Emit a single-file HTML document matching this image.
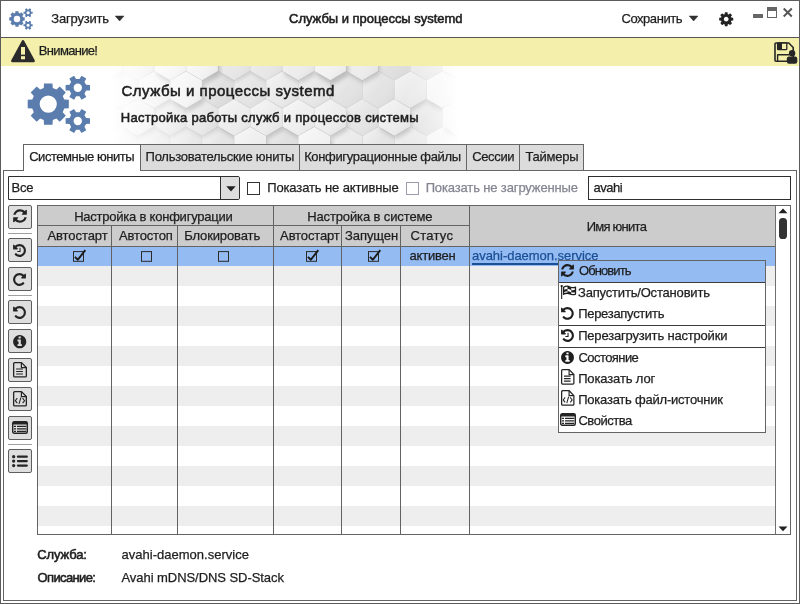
<!DOCTYPE html><html lang="ru"><head><meta charset="utf-8"><title>Службы и процессы systemd</title>
<style>html,body{margin:0;padding:0;background:#fff;overflow:hidden}body{width:800px;height:604px;position:relative;font-family:"Liberation Sans", sans-serif;font-size:13px;color:#1e1e1e}
.t{position:absolute;white-space:nowrap;line-height:16px;height:16px;-webkit-text-stroke:0.25px}svg{display:block;overflow:visible}
</style></head><body>
<div style="position:absolute;left:0px;top:0px;width:800px;height:604px;background:#fff;box-sizing:border-box;border:1px solid #5c5c5c;"></div>
<div style="position:absolute;left:1px;top:37px;width:798px;height:1px;background:#555;"></div>
<div style="position:absolute;left:1px;top:38px;width:798px;height:28px;background:#f4f0ac;"></div>
<svg style="position:absolute;left:100px;top:66px" width="362" height="78" viewBox="0 0 362 78"><defs><linearGradient id="fade" x1="0" x2="1" y1="0" y2="0"><stop offset="0" stop-color="#fff" stop-opacity="1"/><stop offset="0.03" stop-color="#fff" stop-opacity="1"/><stop offset="0.15" stop-color="#fff" stop-opacity="0.6"/><stop offset="0.33" stop-color="#fff" stop-opacity="0"/><stop offset="0.84" stop-color="#fff" stop-opacity="0"/><stop offset="0.93" stop-color="#fff" stop-opacity="0.55"/><stop offset="0.99" stop-color="#fff" stop-opacity="1"/><stop offset="1" stop-color="#fff" stop-opacity="1"/></linearGradient><linearGradient id="hl" x1="0" y1="0" x2="1" y2="1"><stop offset="0" stop-color="#fff" stop-opacity="0.55"/><stop offset="0.5" stop-color="#fff" stop-opacity="0"/><stop offset="1" stop-color="#000" stop-opacity="0.07"/></linearGradient><filter id="bl" x="-20%%" y="-20%%" width="140%%" height="140%%"><feGaussianBlur stdDeviation="2"/></filter><clipPath id="hc"><rect x="0" y="0" width="362" height="78"/></clipPath></defs><g clip-path="url(#hc)"><rect width="362" height="78" fill="#dadada"/><g filter="url(#bl)"><polygon points="310.7,6.3 295.0,15.4 279.2,6.3 279.2,-11.9 295.0,-21.0 310.7,-11.9" fill="#8a8a8a" fill-opacity="0.22"/><polygon points="342.8,6.3 327.0,15.4 311.3,6.3 311.3,-11.9 327.0,-21.0 342.8,-11.9" fill="#8a8a8a" fill-opacity="0.22"/><polygon points="134.5,34.0 118.8,43.1 103.0,34.1 103.0,15.9 118.8,6.8 134.5,15.9" fill="#8a8a8a" fill-opacity="0.22"/><polygon points="166.6,34.0 150.8,43.1 135.0,34.1 135.0,15.9 150.8,6.8 166.6,15.9" fill="#8a8a8a" fill-opacity="0.22"/><polygon points="262.7,34.0 246.9,43.1 231.2,34.1 231.2,15.9 246.9,6.8 262.7,15.9" fill="#8a8a8a" fill-opacity="0.22"/><polygon points="294.7,34.0 279.0,43.1 263.2,34.1 263.2,15.9 279.0,6.8 294.7,15.9" fill="#8a8a8a" fill-opacity="0.22"/><polygon points="22.4,61.8 6.6,70.9 -9.2,61.8 -9.2,43.6 6.6,34.5 22.4,43.6" fill="#8a8a8a" fill-opacity="0.22"/><polygon points="278.7,61.8 262.9,70.9 247.2,61.8 247.2,43.6 262.9,34.5 278.7,43.6" fill="#8a8a8a" fill-opacity="0.22"/><polygon points="342.8,61.8 327.0,70.9 311.3,61.8 311.3,43.6 327.0,34.5 342.8,43.6" fill="#8a8a8a" fill-opacity="0.22"/><polygon points="6.3,89.5 -9.4,98.7 -25.2,89.6 -25.2,71.4 -9.4,62.2 6.3,71.4" fill="#8a8a8a" fill-opacity="0.22"/><polygon points="38.4,89.5 22.6,98.7 6.9,89.6 6.9,71.4 22.6,62.2 38.4,71.4" fill="#8a8a8a" fill-opacity="0.22"/><polygon points="70.4,89.5 54.7,98.7 38.9,89.6 38.9,71.4 54.7,62.2 70.4,71.4" fill="#8a8a8a" fill-opacity="0.22"/><polygon points="102.5,89.5 86.7,98.7 70.9,89.6 70.9,71.4 86.7,62.2 102.5,71.4" fill="#8a8a8a" fill-opacity="0.22"/><polygon points="134.5,89.5 118.8,98.7 103.0,89.6 103.0,71.4 118.8,62.2 134.5,71.4" fill="#8a8a8a" fill-opacity="0.22"/><polygon points="198.6,89.5 182.8,98.7 167.1,89.6 167.1,71.4 182.8,62.2 198.6,71.4" fill="#8a8a8a" fill-opacity="0.22"/></g><polygon points="310.2,5.1 294.4,14.2 278.6,5.1 278.6,-13.1 294.4,-22.2 310.2,-13.1" fill="rgb(224,224,224)"/><polygon points="310.2,5.1 294.4,14.2 278.6,5.1 278.6,-13.1 294.4,-22.2 310.2,-13.1" fill="url(#hl)"/><polygon points="342.2,5.1 326.4,14.2 310.6,5.1 310.6,-13.1 326.4,-22.2 342.2,-13.1" fill="rgb(229,229,229)"/><polygon points="342.2,5.1 326.4,14.2 310.6,5.1 310.6,-13.1 326.4,-22.2 342.2,-13.1" fill="url(#hl)"/><polygon points="134.0,32.9 118.2,42.0 102.3,32.9 102.3,14.6 118.2,5.5 134.0,14.6" fill="rgb(224,224,224)"/><polygon points="134.0,32.9 118.2,42.0 102.3,32.9 102.3,14.6 118.2,5.5 134.0,14.6" fill="url(#hl)"/><polygon points="166.0,32.9 150.2,42.0 134.4,32.9 134.4,14.6 150.2,5.5 166.0,14.6" fill="rgb(229,229,229)"/><polygon points="166.0,32.9 150.2,42.0 134.4,32.9 134.4,14.6 150.2,5.5 166.0,14.6" fill="url(#hl)"/><polygon points="262.1,32.9 246.3,42.0 230.5,32.9 230.5,14.6 246.3,5.5 262.1,14.6" fill="rgb(227,227,227)"/><polygon points="262.1,32.9 246.3,42.0 230.5,32.9 230.5,14.6 246.3,5.5 262.1,14.6" fill="url(#hl)"/><polygon points="294.2,32.9 278.4,42.0 262.6,32.9 262.6,14.6 278.4,5.5 294.2,14.6" fill="rgb(227,227,227)"/><polygon points="294.2,32.9 278.4,42.0 262.6,32.9 262.6,14.6 278.4,5.5 294.2,14.6" fill="url(#hl)"/><polygon points="21.8,60.6 6.0,69.8 -9.8,60.6 -9.8,42.4 6.0,33.2 21.8,42.4" fill="rgb(224,224,224)"/><polygon points="21.8,60.6 6.0,69.8 -9.8,60.6 -9.8,42.4 6.0,33.2 21.8,42.4" fill="url(#hl)"/><polygon points="278.1,60.6 262.3,69.8 246.5,60.6 246.5,42.4 262.3,33.2 278.1,42.4" fill="rgb(229,229,229)"/><polygon points="278.1,60.6 262.3,69.8 246.5,60.6 246.5,42.4 262.3,33.2 278.1,42.4" fill="url(#hl)"/><polygon points="342.2,60.6 326.4,69.8 310.6,60.6 310.6,42.4 326.4,33.2 342.2,42.4" fill="rgb(224,224,224)"/><polygon points="342.2,60.6 326.4,69.8 310.6,60.6 310.6,42.4 326.4,33.2 342.2,42.4" fill="url(#hl)"/><polygon points="5.8,88.4 -10.0,97.5 -25.8,88.4 -25.8,70.1 -10.0,61.0 5.8,70.1" fill="rgb(227,227,227)"/><polygon points="5.8,88.4 -10.0,97.5 -25.8,88.4 -25.8,70.1 -10.0,61.0 5.8,70.1" fill="url(#hl)"/><polygon points="37.8,88.4 22.0,97.5 6.2,88.4 6.2,70.1 22.0,61.0 37.8,70.1" fill="rgb(229,229,229)"/><polygon points="37.8,88.4 22.0,97.5 6.2,88.4 6.2,70.1 22.0,61.0 37.8,70.1" fill="url(#hl)"/><polygon points="69.9,88.4 54.1,97.5 38.3,88.4 38.3,70.1 54.1,61.0 69.9,70.1" fill="rgb(227,227,227)"/><polygon points="69.9,88.4 54.1,97.5 38.3,88.4 38.3,70.1 54.1,61.0 69.9,70.1" fill="url(#hl)"/><polygon points="101.9,88.4 86.1,97.5 70.3,88.4 70.3,70.1 86.1,61.0 101.9,70.1" fill="rgb(227,227,227)"/><polygon points="101.9,88.4 86.1,97.5 70.3,88.4 70.3,70.1 86.1,61.0 101.9,70.1" fill="url(#hl)"/><polygon points="134.0,88.4 118.2,97.5 102.3,88.4 102.3,70.1 118.2,61.0 134.0,70.1" fill="rgb(229,229,229)"/><polygon points="134.0,88.4 118.2,97.5 102.3,88.4 102.3,70.1 118.2,61.0 134.0,70.1" fill="url(#hl)"/><polygon points="198.0,88.4 182.2,97.5 166.4,88.4 166.4,70.1 182.2,61.0 198.0,70.1" fill="rgb(224,224,224)"/><polygon points="198.0,88.4 182.2,97.5 166.4,88.4 166.4,70.1 182.2,61.0 198.0,70.1" fill="url(#hl)"/><g filter="url(#bl)"><polygon points="-9.1,7.4 -24.9,16.5 -40.7,7.4 -40.7,-10.8 -24.9,-19.9 -9.1,-10.8" fill="#8a8a8a" fill-opacity="0.31"/><polygon points="151.1,7.4 135.3,16.5 119.6,7.4 119.6,-10.8 135.3,-19.9 151.1,-10.8" fill="#8a8a8a" fill-opacity="0.31"/><polygon points="183.1,7.4 167.4,16.5 151.6,7.4 151.6,-10.8 167.4,-19.9 183.1,-10.8" fill="#8a8a8a" fill-opacity="0.31"/><polygon points="6.9,35.1 -8.9,44.2 -24.6,35.2 -24.6,17.0 -8.9,7.9 6.9,17.0" fill="#8a8a8a" fill-opacity="0.31"/><polygon points="199.1,35.1 183.4,44.2 167.6,35.2 167.6,17.0 183.4,7.9 199.1,17.0" fill="#8a8a8a" fill-opacity="0.31"/><polygon points="231.2,35.1 215.4,44.2 199.7,35.2 199.7,17.0 215.4,7.9 231.2,17.0" fill="#8a8a8a" fill-opacity="0.31"/><polygon points="87.0,62.9 71.2,72.0 55.5,62.9 55.5,44.7 71.2,35.6 87.0,44.7" fill="#8a8a8a" fill-opacity="0.31"/><polygon points="119.0,62.9 103.3,72.0 87.5,62.9 87.5,44.7 103.3,35.6 119.0,44.7" fill="#8a8a8a" fill-opacity="0.31"/><polygon points="263.2,90.6 247.5,99.8 231.7,90.7 231.7,72.5 247.5,63.3 263.2,72.5" fill="#8a8a8a" fill-opacity="0.31"/><polygon points="295.3,90.6 279.5,99.8 263.8,90.7 263.8,72.5 279.5,63.3 295.3,72.5" fill="#8a8a8a" fill-opacity="0.31"/><polygon points="327.3,90.6 311.6,99.8 295.8,90.7 295.8,72.5 311.6,63.3 327.3,72.5" fill="#8a8a8a" fill-opacity="0.31"/></g><polygon points="-10.2,5.1 -26.0,14.2 -41.8,5.1 -41.8,-13.1 -26.0,-22.2 -10.2,-13.1" fill="rgb(234,234,234)"/><polygon points="-10.2,5.1 -26.0,14.2 -41.8,5.1 -41.8,-13.1 -26.0,-22.2 -10.2,-13.1" fill="url(#hl)"/><polygon points="150.0,5.1 134.2,14.2 118.4,5.1 118.4,-13.1 134.2,-22.2 150.0,-13.1" fill="rgb(232,232,232)"/><polygon points="150.0,5.1 134.2,14.2 118.4,5.1 118.4,-13.1 134.2,-22.2 150.0,-13.1" fill="url(#hl)"/><polygon points="182.0,5.1 166.2,14.2 150.4,5.1 150.4,-13.1 166.2,-22.2 182.0,-13.1" fill="rgb(232,232,232)"/><polygon points="182.0,5.1 166.2,14.2 150.4,5.1 150.4,-13.1 166.2,-22.2 182.0,-13.1" fill="url(#hl)"/><polygon points="5.8,32.9 -10.0,42.0 -25.8,32.9 -25.8,14.6 -10.0,5.5 5.8,14.6" fill="rgb(229,229,229)"/><polygon points="5.8,32.9 -10.0,42.0 -25.8,32.9 -25.8,14.6 -10.0,5.5 5.8,14.6" fill="url(#hl)"/><polygon points="198.0,32.9 182.2,42.0 166.4,32.9 166.4,14.6 182.2,5.5 198.0,14.6" fill="rgb(234,234,234)"/><polygon points="198.0,32.9 182.2,42.0 166.4,32.9 166.4,14.6 182.2,5.5 198.0,14.6" fill="url(#hl)"/><polygon points="230.1,32.9 214.3,42.0 198.5,32.9 198.5,14.6 214.3,5.5 230.1,14.6" fill="rgb(232,232,232)"/><polygon points="230.1,32.9 214.3,42.0 198.5,32.9 198.5,14.6 214.3,5.5 230.1,14.6" fill="url(#hl)"/><polygon points="85.9,60.6 70.1,69.8 54.3,60.6 54.3,42.4 70.1,33.2 85.9,42.4" fill="rgb(229,229,229)"/><polygon points="85.9,60.6 70.1,69.8 54.3,60.6 54.3,42.4 70.1,33.2 85.9,42.4" fill="url(#hl)"/><polygon points="117.9,60.6 102.1,69.8 86.3,60.6 86.3,42.4 102.1,33.2 117.9,42.4" fill="rgb(229,229,229)"/><polygon points="117.9,60.6 102.1,69.8 86.3,60.6 86.3,42.4 102.1,33.2 117.9,42.4" fill="url(#hl)"/><polygon points="262.1,88.4 246.3,97.5 230.5,88.4 230.5,70.1 246.3,61.0 262.1,70.1" fill="rgb(234,234,234)"/><polygon points="262.1,88.4 246.3,97.5 230.5,88.4 230.5,70.1 246.3,61.0 262.1,70.1" fill="url(#hl)"/><polygon points="294.2,88.4 278.4,97.5 262.6,88.4 262.6,70.1 278.4,61.0 294.2,70.1" fill="rgb(229,229,229)"/><polygon points="294.2,88.4 278.4,97.5 262.6,88.4 262.6,70.1 278.4,61.0 294.2,70.1" fill="url(#hl)"/><polygon points="326.2,88.4 310.4,97.5 294.6,88.4 294.6,70.1 310.4,61.0 326.2,70.1" fill="rgb(232,232,232)"/><polygon points="326.2,88.4 310.4,97.5 294.6,88.4 294.6,70.1 310.4,61.0 326.2,70.1" fill="url(#hl)"/><g filter="url(#bl)"><polygon points="55.5,8.5 39.7,17.6 24.0,8.5 24.0,-9.7 39.7,-18.8 55.5,-9.7" fill="#8a8a8a" fill-opacity="0.40"/><polygon points="215.7,8.5 200.0,17.6 184.2,8.5 184.2,-9.7 200.0,-18.8 215.7,-9.7" fill="#8a8a8a" fill-opacity="0.40"/><polygon points="279.8,8.5 264.0,17.6 248.3,8.5 248.3,-9.7 264.0,-18.8 279.8,-9.7" fill="#8a8a8a" fill-opacity="0.40"/><polygon points="408.0,8.5 392.2,17.6 376.5,8.5 376.5,-9.7 392.2,-18.8 408.0,-9.7" fill="#8a8a8a" fill-opacity="0.40"/><polygon points="39.5,36.2 23.7,45.3 8.0,36.2 8.0,18.1 23.7,8.9 39.5,18.1" fill="#8a8a8a" fill-opacity="0.40"/><polygon points="71.5,36.2 55.8,45.3 40.0,36.2 40.0,18.1 55.8,8.9 71.5,18.1" fill="#8a8a8a" fill-opacity="0.40"/><polygon points="327.9,36.2 312.1,45.3 296.3,36.2 296.3,18.1 312.1,8.9 327.9,18.1" fill="#8a8a8a" fill-opacity="0.40"/><polygon points="392.0,36.2 376.2,45.3 360.4,36.2 360.4,18.1 376.2,8.9 392.0,18.1" fill="#8a8a8a" fill-opacity="0.40"/><polygon points="-8.6,64.0 -24.3,73.1 -40.1,64.0 -40.1,45.8 -24.3,36.7 -8.6,45.8" fill="#8a8a8a" fill-opacity="0.40"/><polygon points="55.5,64.0 39.7,73.1 24.0,64.0 24.0,45.8 39.7,36.7 55.5,45.8" fill="#8a8a8a" fill-opacity="0.40"/><polygon points="151.6,64.0 135.9,73.1 120.1,64.0 120.1,45.8 135.9,36.7 151.6,45.8" fill="#8a8a8a" fill-opacity="0.40"/><polygon points="183.7,64.0 167.9,73.1 152.2,64.0 152.2,45.8 167.9,36.7 183.7,45.8" fill="#8a8a8a" fill-opacity="0.40"/><polygon points="215.7,64.0 200.0,73.1 184.2,64.0 184.2,45.8 200.0,36.7 215.7,45.8" fill="#8a8a8a" fill-opacity="0.40"/><polygon points="247.8,64.0 232.0,73.1 216.2,64.0 216.2,45.8 232.0,36.7 247.8,45.8" fill="#8a8a8a" fill-opacity="0.40"/><polygon points="311.8,64.0 296.1,73.1 280.3,64.0 280.3,45.8 296.1,36.7 311.8,45.8" fill="#8a8a8a" fill-opacity="0.40"/><polygon points="408.0,64.0 392.2,73.1 376.5,64.0 376.5,45.8 392.2,36.7 408.0,45.8" fill="#8a8a8a" fill-opacity="0.40"/><polygon points="167.7,91.8 151.9,100.9 136.1,91.8 136.1,73.6 151.9,64.5 167.7,73.6" fill="#8a8a8a" fill-opacity="0.40"/><polygon points="359.9,91.8 344.2,100.9 328.4,91.8 328.4,73.6 344.2,64.5 359.9,73.6" fill="#8a8a8a" fill-opacity="0.40"/></g><polygon points="53.8,5.1 38.0,14.2 22.2,5.1 22.2,-13.1 38.0,-22.2 53.8,-13.1" fill="rgb(234,234,234)"/><polygon points="53.8,5.1 38.0,14.2 22.2,5.1 22.2,-13.1 38.0,-22.2 53.8,-13.1" fill="url(#hl)"/><polygon points="214.1,5.1 198.3,14.2 182.5,5.1 182.5,-13.1 198.3,-22.2 214.1,-13.1" fill="rgb(237,237,237)"/><polygon points="214.1,5.1 198.3,14.2 182.5,5.1 182.5,-13.1 198.3,-22.2 214.1,-13.1" fill="url(#hl)"/><polygon points="278.1,5.1 262.3,14.2 246.5,5.1 246.5,-13.1 262.3,-22.2 278.1,-13.1" fill="rgb(237,237,237)"/><polygon points="278.1,5.1 262.3,14.2 246.5,5.1 246.5,-13.1 262.3,-22.2 278.1,-13.1" fill="url(#hl)"/><polygon points="406.3,5.1 390.5,14.2 374.7,5.1 374.7,-13.1 390.5,-22.2 406.3,-13.1" fill="rgb(234,234,234)"/><polygon points="406.3,5.1 390.5,14.2 374.7,5.1 374.7,-13.1 390.5,-22.2 406.3,-13.1" fill="url(#hl)"/><polygon points="37.8,32.9 22.0,42.0 6.2,32.9 6.2,14.6 22.0,5.5 37.8,14.6" fill="rgb(234,234,234)"/><polygon points="37.8,32.9 22.0,42.0 6.2,32.9 6.2,14.6 22.0,5.5 37.8,14.6" fill="url(#hl)"/><polygon points="69.9,32.9 54.1,42.0 38.3,32.9 38.3,14.6 54.1,5.5 69.9,14.6" fill="rgb(239,239,239)"/><polygon points="69.9,32.9 54.1,42.0 38.3,32.9 38.3,14.6 54.1,5.5 69.9,14.6" fill="url(#hl)"/><polygon points="326.2,32.9 310.4,42.0 294.6,32.9 294.6,14.6 310.4,5.5 326.2,14.6" fill="rgb(234,234,234)"/><polygon points="326.2,32.9 310.4,42.0 294.6,32.9 294.6,14.6 310.4,5.5 326.2,14.6" fill="url(#hl)"/><polygon points="390.3,32.9 374.5,42.0 358.7,32.9 358.7,14.6 374.5,5.5 390.3,14.6" fill="rgb(234,234,234)"/><polygon points="390.3,32.9 374.5,42.0 358.7,32.9 358.7,14.6 374.5,5.5 390.3,14.6" fill="url(#hl)"/><polygon points="-10.2,60.6 -26.0,69.8 -41.8,60.6 -41.8,42.4 -26.0,33.2 -10.2,42.4" fill="rgb(234,234,234)"/><polygon points="-10.2,60.6 -26.0,69.8 -41.8,60.6 -41.8,42.4 -26.0,33.2 -10.2,42.4" fill="url(#hl)"/><polygon points="53.8,60.6 38.0,69.8 22.2,60.6 22.2,42.4 38.0,33.2 53.8,42.4" fill="rgb(234,234,234)"/><polygon points="53.8,60.6 38.0,69.8 22.2,60.6 22.2,42.4 38.0,33.2 53.8,42.4" fill="url(#hl)"/><polygon points="150.0,60.6 134.2,69.8 118.4,60.6 118.4,42.4 134.2,33.2 150.0,42.4" fill="rgb(237,237,237)"/><polygon points="150.0,60.6 134.2,69.8 118.4,60.6 118.4,42.4 134.2,33.2 150.0,42.4" fill="url(#hl)"/><polygon points="182.0,60.6 166.2,69.8 150.4,60.6 150.4,42.4 166.2,33.2 182.0,42.4" fill="rgb(237,237,237)"/><polygon points="182.0,60.6 166.2,69.8 150.4,60.6 150.4,42.4 166.2,33.2 182.0,42.4" fill="url(#hl)"/><polygon points="214.1,60.6 198.3,69.8 182.5,60.6 182.5,42.4 198.3,33.2 214.1,42.4" fill="rgb(239,239,239)"/><polygon points="214.1,60.6 198.3,69.8 182.5,60.6 182.5,42.4 198.3,33.2 214.1,42.4" fill="url(#hl)"/><polygon points="246.1,60.6 230.3,69.8 214.5,60.6 214.5,42.4 230.3,33.2 246.1,42.4" fill="rgb(237,237,237)"/><polygon points="246.1,60.6 230.3,69.8 214.5,60.6 214.5,42.4 230.3,33.2 246.1,42.4" fill="url(#hl)"/><polygon points="310.2,60.6 294.4,69.8 278.6,60.6 278.6,42.4 294.4,33.2 310.2,42.4" fill="rgb(237,237,237)"/><polygon points="310.2,60.6 294.4,69.8 278.6,60.6 278.6,42.4 294.4,33.2 310.2,42.4" fill="url(#hl)"/><polygon points="406.3,60.6 390.5,69.8 374.7,60.6 374.7,42.4 390.5,33.2 406.3,42.4" fill="rgb(234,234,234)"/><polygon points="406.3,60.6 390.5,69.8 374.7,60.6 374.7,42.4 390.5,33.2 406.3,42.4" fill="url(#hl)"/><polygon points="166.0,88.4 150.2,97.5 134.4,88.4 134.4,70.1 150.2,61.0 166.0,70.1" fill="rgb(239,239,239)"/><polygon points="166.0,88.4 150.2,97.5 134.4,88.4 134.4,70.1 150.2,61.0 166.0,70.1" fill="url(#hl)"/><polygon points="358.3,88.4 342.5,97.5 326.6,88.4 326.6,70.1 342.5,61.0 358.3,70.1" fill="rgb(239,239,239)"/><polygon points="358.3,88.4 342.5,97.5 326.6,88.4 326.6,70.1 342.5,61.0 358.3,70.1" fill="url(#hl)"/><g filter="url(#bl)"><polygon points="24.0,9.6 8.3,18.7 -7.5,9.6 -7.5,-8.6 8.2,-17.7 24.0,-8.6" fill="#8a8a8a" fill-opacity="0.49"/><polygon points="88.1,9.6 72.3,18.7 56.6,9.6 56.6,-8.6 72.3,-17.7 88.1,-8.6" fill="#8a8a8a" fill-opacity="0.49"/><polygon points="120.1,9.6 104.4,18.7 88.6,9.6 88.6,-8.6 104.4,-17.7 120.1,-8.6" fill="#8a8a8a" fill-opacity="0.49"/><polygon points="248.3,9.6 232.6,18.7 216.8,9.6 216.8,-8.6 232.6,-17.7 248.3,-8.6" fill="#8a8a8a" fill-opacity="0.49"/><polygon points="376.5,9.6 360.7,18.7 345.0,9.6 345.0,-8.6 360.7,-17.7 376.5,-8.6" fill="#8a8a8a" fill-opacity="0.49"/><polygon points="104.1,37.3 88.4,46.5 72.6,37.4 72.6,19.2 88.4,10.1 104.1,19.2" fill="#8a8a8a" fill-opacity="0.49"/><polygon points="360.5,37.3 344.7,46.5 328.9,37.4 328.9,19.2 344.7,10.1 360.5,19.2" fill="#8a8a8a" fill-opacity="0.49"/><polygon points="376.5,65.1 360.7,74.2 345.0,65.1 345.0,46.9 360.7,37.8 376.5,46.9" fill="#8a8a8a" fill-opacity="0.49"/><polygon points="232.3,92.8 216.5,102.0 200.8,92.9 200.8,74.7 216.5,65.5 232.3,74.7" fill="#8a8a8a" fill-opacity="0.49"/><polygon points="392.5,92.8 376.7,102.0 361.0,92.9 361.0,74.7 376.7,65.5 392.5,74.7" fill="#8a8a8a" fill-opacity="0.49"/></g><polygon points="21.8,5.1 6.0,14.2 -9.8,5.1 -9.8,-13.1 6.0,-22.2 21.8,-13.1" fill="rgb(239,239,239)"/><polygon points="21.8,5.1 6.0,14.2 -9.8,5.1 -9.8,-13.1 6.0,-22.2 21.8,-13.1" fill="url(#hl)"/><polygon points="85.9,5.1 70.1,14.2 54.3,5.1 54.3,-13.1 70.1,-22.2 85.9,-13.1" fill="rgb(244,244,244)"/><polygon points="85.9,5.1 70.1,14.2 54.3,5.1 54.3,-13.1 70.1,-22.2 85.9,-13.1" fill="url(#hl)"/><polygon points="117.9,5.1 102.1,14.2 86.3,5.1 86.3,-13.1 102.1,-22.2 117.9,-13.1" fill="rgb(242,242,242)"/><polygon points="117.9,5.1 102.1,14.2 86.3,5.1 86.3,-13.1 102.1,-22.2 117.9,-13.1" fill="url(#hl)"/><polygon points="246.1,5.1 230.3,14.2 214.5,5.1 214.5,-13.1 230.3,-22.2 246.1,-13.1" fill="rgb(242,242,242)"/><polygon points="246.1,5.1 230.3,14.2 214.5,5.1 214.5,-13.1 230.3,-22.2 246.1,-13.1" fill="url(#hl)"/><polygon points="374.3,5.1 358.5,14.2 342.7,5.1 342.7,-13.1 358.5,-22.2 374.3,-13.1" fill="rgb(239,239,239)"/><polygon points="374.3,5.1 358.5,14.2 342.7,5.1 342.7,-13.1 358.5,-22.2 374.3,-13.1" fill="url(#hl)"/><polygon points="101.9,32.9 86.1,42.0 70.3,32.9 70.3,14.6 86.1,5.5 101.9,14.6" fill="rgb(242,242,242)"/><polygon points="101.9,32.9 86.1,42.0 70.3,32.9 70.3,14.6 86.1,5.5 101.9,14.6" fill="url(#hl)"/><polygon points="358.3,32.9 342.5,42.0 326.6,32.9 326.6,14.6 342.5,5.5 358.3,14.6" fill="rgb(242,242,242)"/><polygon points="358.3,32.9 342.5,42.0 326.6,32.9 326.6,14.6 342.5,5.5 358.3,14.6" fill="url(#hl)"/><polygon points="374.3,60.6 358.5,69.8 342.7,60.6 342.7,42.4 358.5,33.2 374.3,42.4" fill="rgb(239,239,239)"/><polygon points="374.3,60.6 358.5,69.8 342.7,60.6 342.7,42.4 358.5,33.2 374.3,42.4" fill="url(#hl)"/><polygon points="230.1,88.4 214.3,97.5 198.5,88.4 198.5,70.1 214.3,61.0 230.1,70.1" fill="rgb(242,242,242)"/><polygon points="230.1,88.4 214.3,97.5 198.5,88.4 198.5,70.1 214.3,61.0 230.1,70.1" fill="url(#hl)"/><polygon points="390.3,88.4 374.5,97.5 358.7,88.4 358.7,70.1 374.5,61.0 390.3,70.1" fill="rgb(239,239,239)"/><polygon points="390.3,88.4 374.5,97.5 358.7,88.4 358.7,70.1 374.5,61.0 390.3,70.1" fill="url(#hl)"/><rect width="362" height="78" fill="url(#fade)"/></g></svg>
<div style="position:absolute;left:3px;top:170px;width:794px;height:431px;background:#fff;box-sizing:border-box;border:1px solid #646464;"></div>
<div style="position:absolute;left:140px;top:144px;width:160px;height:27px;background:#dcdcdc;box-sizing:border-box;border:1px solid #666;"></div>
<div style="position:absolute;left:299px;top:144px;width:168px;height:27px;background:#dcdcdc;box-sizing:border-box;border:1px solid #666;"></div>
<div style="position:absolute;left:466px;top:144px;width:54px;height:27px;background:#dcdcdc;box-sizing:border-box;border:1px solid #666;"></div>
<div style="position:absolute;left:519px;top:144px;width:65px;height:27px;background:#dcdcdc;box-sizing:border-box;border:1px solid #666;"></div>
<div style="position:absolute;left:23px;top:144px;width:118px;height:27px;background:#fff;box-sizing:border-box;border:1px solid #646464;border-bottom:none;"></div>
<div style="position:absolute;left:8px;top:176px;width:232px;height:24px;background:#fff;box-sizing:border-box;border:1px solid #2e2e2e;border-radius:0 2px 2px 0;"></div>
<div style="position:absolute;left:220px;top:177px;width:19px;height:22px;background:#dedede;box-sizing:border-box;border-left:1px solid #2e2e2e;border-radius:0 1px 1px 0;"></div>
<svg style="position:absolute;left:225.600px;top:185.500px" width="10" height="6" viewBox="0 0 10 6"><path d="M0.3 0.3h9.4L5 5.6z" fill="#222"/></svg>
<div style="position:absolute;left:247px;top:182px;width:13px;height:13px;background:#fff;box-sizing:border-box;border:1px solid #333;"></div>
<div style="position:absolute;left:406px;top:182px;width:13px;height:13px;background:#fff;box-sizing:border-box;border:1px solid #9c9caa;"></div>
<div style="position:absolute;left:588px;top:176px;width:203px;height:24px;background:#fff;box-sizing:border-box;border:1px solid #2e2e2e;"></div>
<div style="position:absolute;left:8px;top:205px;width:24px;height:24px;background:#dedede;box-sizing:border-box;border:1px solid #5e5e5e;border-radius:2px;"></div>
<div style="position:absolute;left:8px;top:238px;width:24px;height:24px;background:#dedede;box-sizing:border-box;border:1px solid #5e5e5e;border-radius:2px;"></div>
<div style="position:absolute;left:8px;top:267px;width:24px;height:24px;background:#dedede;box-sizing:border-box;border:1px solid #5e5e5e;border-radius:2px;"></div>
<div style="position:absolute;left:8px;top:300px;width:24px;height:24px;background:#dedede;box-sizing:border-box;border:1px solid #5e5e5e;border-radius:2px;"></div>
<div style="position:absolute;left:8px;top:329px;width:24px;height:24px;background:#dedede;box-sizing:border-box;border:1px solid #5e5e5e;border-radius:2px;"></div>
<div style="position:absolute;left:8px;top:358px;width:24px;height:24px;background:#dedede;box-sizing:border-box;border:1px solid #5e5e5e;border-radius:2px;"></div>
<div style="position:absolute;left:8px;top:387px;width:24px;height:24px;background:#dedede;box-sizing:border-box;border:1px solid #5e5e5e;border-radius:2px;"></div>
<div style="position:absolute;left:8px;top:416px;width:24px;height:24px;background:#dedede;box-sizing:border-box;border:1px solid #5e5e5e;border-radius:2px;"></div>
<div style="position:absolute;left:8px;top:449px;width:24px;height:24px;background:#dedede;box-sizing:border-box;border:1px solid #5e5e5e;border-radius:2px;"></div>
<div style="position:absolute;left:8px;top:233px;width:24px;height:1px;background:#a0a0a0;"></div>
<div style="position:absolute;left:8px;top:295px;width:24px;height:1px;background:#a0a0a0;"></div>
<div style="position:absolute;left:8px;top:444px;width:24px;height:1px;background:#a0a0a0;"></div>
<svg style="position:absolute;left:11.85px;top:208.3px" width="16" height="16" viewBox="0 0 1792 1792"><path fill="#242424" d="M1639 1056q0 5-1 7-64 268-268 434.500t-478 166.500q-146 0-282.500-55t-243.500-157l-129 129q-19 19-45 19t-45-19-19-45v-448q0-26 19-45t45-19h448q26 0 45 19t19 45-19 45l-137 137q71 66 161 102t187 36q134 0 250-65t186-179q11-17 53-117 8-23 30-23h192q13 0 22.500 9.500t9.500 22.500zm25-800v448q0 26-19 45t-45 19h-448q-26 0-45-19t-19-45 19-45l138-138q-148-137-349-137-134 0-250 65t-186 179q-11 17-53 117-8 23-30 23h-199q-13 0-22.500-9.500t-9.500-22.500v-7q65-268 270-434.500t480-166.500q146 0 284 55.500t245 156.500l130-129q19-19 45-19t45 19 19 45z"/></svg>
<svg style="position:absolute;left:12px;top:243.1px" width="15" height="15" viewBox="0 0 1792 1792"><path fill="#242424" d="M1664 896q0 156-61 298t-164 245-245 164-298 61q-172 0-327-72.500t-264-204.500q-7-10-6.500-22.500t8.500-20.500l137-138q10-9 25-9 16 2 23 12 73 95 179 147t225 52q104 0 198.500-40.500t163.500-109.500 109.500-163.500 40.500-198.500-40.500-198.500-109.500-163.500-163.500-109.500-198.500-40.500q-98 0-188 35.500t-160 101.500l137 138q31 30 14 69-17 40-59 40h-448q-26 0-45-19t-19-45v-448q0-42 40-59 39-17 69 14l130 129q107-101 244.500-156.500t284.500-55.500q156 0 298 61t245 164 164 245 61 298zm-640-288v448q0 14-9 23t-23 9h-320q-14 0-23-9t-9-23v-64q0-14 9-23t23-9h224v-352q0-14 9-23t23-9h64q14 0 23 9t9 23z"/></svg>
<svg style="position:absolute;left:12px;top:271.6px" width="15" height="15" viewBox="0 0 1792 1792"><path fill="#242424" d="M1664 256v448q0 26-19 45t-45 19h-448q-42 0-59-40-17-39 14-69l138-138q-148-137-349-137-104 0-198.500 40.500t-163.500 109.500-109.500 163.500-40.500 198.500 40.500 198.500 109.500 163.500 163.500 109.500 198.500 40.500q119 0 225-52t179-147q7-10 23-12 15 0 25 9l137 138q9 8 9.500 20.500t-7.500 22.500q-109 132-264 204.500t-327 72.500q-156 0-298-61t-245-164-164-245-61-298 61-298 164-245 245-164 298-61q147 0 284.500 55.500t244.500 156.500l130-129q29-31 70-14 39 17 39 59z"/></svg>
<svg style="position:absolute;left:11.7px;top:304.9px" width="15" height="15" viewBox="0 0 1792 1792"><path fill="#242424" d="M1664 896q0 156-61 298t-164 245-245 164-298 61q-172 0-327-72.500t-264-204.500q-7-10-6.500-22.500t8.500-20.500l137-138q10-9 25-9 16 2 23 12 73 95 179 147t225 52q104 0 198.500-40.500t163.500-109.500 109.500-163.500 40.500-198.500-40.500-198.500-109.500-163.500-163.500-109.500-198.500-40.500q-98 0-188 35.500t-160 101.500l137 138q31 30 14 69-17 40-59 40h-448q-26 0-45-19t-19-45v-448q0-42 40-59 39-17 69 14l130 129q107-101 244.500-156.500t284.500-55.500q156 0 298 61t245 164 164 245 61 298z"/></svg>
<svg style="position:absolute;left:12.15px;top:333.55px" width="15.4" height="15.4" viewBox="0 0 1792 1792"><path fill="#242424" d="M1152 1376v-160q0-14-9-23t-23-9h-96v-512q0-14-9-23t-23-9h-320q-14 0-23 9t-9 23v160q0 14 9 23t23 9h96v320h-96q-14 0-23 9t-9 23v160q0 14 9 23t23 9h448q14 0 23-9t9-23zm-128-896v-160q0-14-9-23t-23-9h-192q-14 0-23 9t-9 23v160q0 14 9 23t23 9h192q14 0 23-9t9-23zm640 416q0 209-103 385.500t-279.500 279.500-385.500 103-385.500-103-279.500-279.500-103-385.500 103-385.500 279.500-279.500 385.500-103 385.500 103 279.500 279.500 103 385.500z"/></svg>
<svg style="position:absolute;left:13.1px;top:362.4px" width="14" height="15.5" viewBox="0 0 14 15.5" preserveAspectRatio="none"><path d="M1.6 0.65h6.9l4.85 4.85v8.400a1 1 0 0 1-1 1h-10.700a1 1 0 0 1-1-1v-12.200a1 1 0 0 1 1-1z" fill="none" stroke="#242424" stroke-width="1.300" stroke-linejoin="round"/><path d="M8.400 0.800v4.800h4.800" fill="none" stroke="#242424" stroke-width="1.200"/><path d="M3.100 7h6.800M3.100 9.500h6.800M3.100 12h6.800" stroke="#242424" stroke-width="1.150"/></svg>
<svg style="position:absolute;left:13.1px;top:391.3px" width="14" height="15.5" viewBox="0 0 14 15.5" preserveAspectRatio="none"><path d="M1.6 0.65h6.900l4.850 4.850v8.400a1 1 0 0 1-1 1h-10.700a1 1 0 0 1-1-1v-12.200a1 1 0 0 1 1-1z" fill="none" stroke="#242424" stroke-width="1.300" stroke-linejoin="round"/><path d="M8.400 0.800v4.800h4.800" fill="none" stroke="#242424" stroke-width="1.200"/><path d="M4.300 7.200L2.300 9.700L4.300 12.200M9.600 7.200L11.600 9.700L9.600 12.200M7.900 6.600L6 12.900" fill="none" stroke="#242424" stroke-width="1.050"/></svg>
<svg style="position:absolute;left:11.9px;top:421px" width="16" height="13" viewBox="0 0 16 13"><rect x="0.700" y="0.700" width="14.600" height="11.600" rx="1.500" fill="none" stroke="#242424" stroke-width="1.400"/><path d="M0.700 3.600v-1.400a1.500 1.500 0 0 1 1.500-1.500h11.600a1.500 1.500 0 0 1 1.500 1.500v1.400z" fill="#242424"/><path d="M5 5.400h9.300M5 7.800h9.300M5 10.300h9.300" stroke="#242424" stroke-width="1.150"/><path d="M1.900 5.400h2.100M1.900 7.800h2.100M1.900 10.300h2.100" stroke="#242424" stroke-width="1.150"/></svg>
<svg style="position:absolute;left:11.9px;top:455.2px" width="16" height="12.400" viewBox="0 0 16 12.400"><circle cx="1.650" cy="1.700" r="1.650" fill="#242424"/><circle cx="1.650" cy="6.100" r="1.650" fill="#242424"/><circle cx="1.650" cy="10.600" r="1.650" fill="#242424"/><path d="M5.900 1.700h8.900M5.900 6.100h8.900M5.900 10.600h8.900" stroke="#242424" stroke-width="2.200" stroke-linecap="round"/></svg>
<div style="position:absolute;left:37px;top:205px;width:754px;height:330px;background:#fff;box-sizing:border-box;border:1px solid #646464;"></div>
<div style="position:absolute;left:38px;top:266px;width:737px;height:20px;background:#eeeeee;"></div>
<div style="position:absolute;left:38px;top:306px;width:737px;height:20px;background:#eeeeee;"></div>
<div style="position:absolute;left:38px;top:346px;width:737px;height:20px;background:#eeeeee;"></div>
<div style="position:absolute;left:38px;top:386px;width:737px;height:20px;background:#eeeeee;"></div>
<div style="position:absolute;left:38px;top:426px;width:737px;height:20px;background:#eeeeee;"></div>
<div style="position:absolute;left:38px;top:466px;width:737px;height:20px;background:#eeeeee;"></div>
<div style="position:absolute;left:38px;top:506px;width:737px;height:20px;background:#eeeeee;"></div>
<div style="position:absolute;left:38px;top:247px;width:737px;height:19px;background:#94bbf2;"></div>
<div style="position:absolute;left:38px;top:206px;width:737px;height:40px;background:#cccccc;"></div>
<div style="position:absolute;left:38px;top:225px;width:432px;height:1px;background:#646464;"></div>
<div style="position:absolute;left:38px;top:246px;width:738px;height:1px;background:#646464;"></div>
<div style="position:absolute;left:273px;top:206px;width:1px;height:328px;background:#626262;"></div>
<div style="position:absolute;left:469px;top:206px;width:1px;height:328px;background:#626262;"></div>
<div style="position:absolute;left:111px;top:226px;width:1px;height:308px;background:#626262;"></div>
<div style="position:absolute;left:177px;top:226px;width:1px;height:308px;background:#626262;"></div>
<div style="position:absolute;left:341px;top:226px;width:1px;height:308px;background:#626262;"></div>
<div style="position:absolute;left:400px;top:226px;width:1px;height:308px;background:#626262;"></div>
<div style="position:absolute;left:775px;top:206px;width:1px;height:328px;background:#707070;"></div>
<div style="position:absolute;left:776px;top:206px;width:14px;height:328px;background:#fff;"></div>
<svg style="position:absolute;left:778px;top:208px" width="10" height="6" viewBox="0 0 10 6"><path d="M0.5 5.2L5 0.6L9.5 5.2z" fill="#222"/></svg>
<svg style="position:absolute;left:778px;top:526px" width="10" height="6" viewBox="0 0 10 6"><path d="M0.5 0.6L5 5.2L9.5 0.6z" fill="#222"/></svg>
<div style="position:absolute;left:779px;top:217.8px;width:8px;height:21.1px;background:#333;border-radius:3.600px;"></div>
<svg style="position:absolute;left:73px;top:249px" width="14" height="13" viewBox="0 0 14 13"><rect x="0.5" y="2.6" width="10" height="9.700" fill="none" stroke="#2a2a2a" stroke-width="1"/><path d="M1.900 7.900L4.900 10.700L12.300 1.200" fill="none" stroke="#1c1c1c" stroke-width="1.900" stroke-linejoin="round"/></svg>
<svg style="position:absolute;left:141px;top:249px" width="14" height="13" viewBox="0 0 14 13"><rect x="0.5" y="2.6" width="10" height="9.700" fill="none" stroke="#2a2a2a" stroke-width="1"/></svg>
<svg style="position:absolute;left:217.5px;top:249px" width="14" height="13" viewBox="0 0 14 13"><rect x="0.5" y="2.6" width="10" height="9.700" fill="none" stroke="#2a2a2a" stroke-width="1"/></svg>
<svg style="position:absolute;left:306px;top:249px" width="14" height="13" viewBox="0 0 14 13"><rect x="0.5" y="2.6" width="10" height="9.700" fill="none" stroke="#2a2a2a" stroke-width="1"/><path d="M1.900 7.900L4.900 10.700L12.300 1.200" fill="none" stroke="#1c1c1c" stroke-width="1.900" stroke-linejoin="round"/></svg>
<svg style="position:absolute;left:368px;top:249px" width="14" height="13" viewBox="0 0 14 13"><rect x="0.5" y="2.6" width="10" height="9.700" fill="none" stroke="#2a2a2a" stroke-width="1"/><path d="M1.900 7.900L4.900 10.700L12.300 1.200" fill="none" stroke="#1c1c1c" stroke-width="1.900" stroke-linejoin="round"/></svg>
<div style="position:absolute;left:0;top:0;width:800px;height:604px;will-change:transform">
<span class="t" style="left:472px;top:248px;color:#1b4f96;letter-spacing:-0.034px;text-decoration:underline;text-underline-offset:2.5px;text-decoration-thickness:1.5px;">avahi-daemon.service</span>
</div>
<div style="position:absolute;left:558px;top:260px;width:208px;height:173px;background:#fff;box-sizing:border-box;border:1px solid #646464;"></div>
<div style="position:absolute;left:559px;top:261px;width:206px;height:21px;background:#94bbf2;"></div>
<div style="position:absolute;left:559px;top:282px;width:206px;height:1px;background:#3c3c3c;"></div>
<div style="position:absolute;left:559px;top:325px;width:206px;height:1px;background:#3c3c3c;"></div>
<div style="position:absolute;left:559px;top:347px;width:206px;height:1px;background:#3c3c3c;"></div>
<svg style="position:absolute;left:560.2px;top:262.9px" width="15" height="15" viewBox="0 0 1792 1792"><path fill="#1e1e1e" d="M1639 1056q0 5-1 7-64 268-268 434.500t-478 166.500q-146 0-282.500-55t-243.500-157l-129 129q-19 19-45 19t-45-19-19-45v-448q0-26 19-45t45-19h448q26 0 45 19t19 45-19 45l-137 137q71 66 161 102t187 36q134 0 250-65t186-179q11-17 53-117 8-23 30-23h192q13 0 22.500 9.500t9.500 22.500zm25-800v448q0 26-19 45t-45 19h-448q-26 0-45-19t-19-45 19-45l138-138q-148-137-349-137-134 0-250 65t-186 179q-11 17-53 117-8 23-30 23h-199q-13 0-22.500-9.500t-9.500-22.500v-7q65-268 270-434.500t480-166.500q146 0 284 55.500t245 156.500l130-129q19-19 45-19t45 19 19 45z"/></svg>
<svg style="position:absolute;left:560px;top:284.4px" width="18" height="16" viewBox="560 284 18 16"><path d="M561.650 285.600V299" stroke="#1e1e1e" stroke-width="1.100"/><circle cx="561.650" cy="286.100" r="1.150" fill="#1e1e1e"/><path d="M563.600 287.300C565.800 285.900 568 285.900 570 287S573.600 287.900 575.500 287.100V294.100C573.600 294.900 572 295 570 294S565.800 293 563.600 294.300Z" fill="#fff" stroke="#1e1e1e" stroke-width="1.300" stroke-linejoin="round"/><path d="M567.500 286.400C568.600 286.400 570 287 571.300 287.500V289.900C570 289.400 568.600 288.900 567.500 288.900ZM567.500 291.300C568.600 291.300 570 291.800 571.300 292.300V294.500C570 294 568.600 293.500 567.500 293.500ZM563.600 289.900C565 289.200 566.300 288.900 567.500 288.900V291.300C566.300 291.300 565 291.600 563.600 292.300ZM571.300 289.900C572.800 290.300 574 290.200 575.500 289.700V291.900C574 292.400 572.800 292.600 571.300 292.300Z" fill="#1e1e1e"/></svg>
<svg style="position:absolute;left:560.4px;top:306.45px" width="14.8" height="14.8" viewBox="0 0 1792 1792"><path fill="#1e1e1e" d="M1664 896q0 156-61 298t-164 245-245 164-298 61q-172 0-327-72.500t-264-204.500q-7-10-6.500-22.500t8.500-20.500l137-138q10-9 25-9 16 2 23 12 73 95 179 147t225 52q104 0 198.500-40.500t163.500-109.500 109.500-163.500 40.500-198.500-40.500-198.500-109.500-163.500-163.500-109.500-198.500-40.500q-98 0-188 35.500t-160 101.500l137 138q31 30 14 69-17 40-59 40h-448q-26 0-45-19t-19-45v-448q0-42 40-59 39-17 69 14l130 129q107-101 244.500-156.500t284.500-55.500q156 0 298 61t245 164 164 245 61 298z"/></svg>
<svg style="position:absolute;left:560.3px;top:328.2px" width="15" height="15" viewBox="0 0 1792 1792"><path fill="#1e1e1e" d="M1664 896q0 156-61 298t-164 245-245 164-298 61q-172 0-327-72.500t-264-204.500q-7-10-6.500-22.500t8.500-20.500l137-138q10-9 25-9 16 2 23 12 73 95 179 147t225 52q104 0 198.500-40.500t163.500-109.500 109.500-163.500 40.500-198.500-40.500-198.500-109.500-163.500-163.500-109.500-198.500-40.500q-98 0-188 35.500t-160 101.500l137 138q31 30 14 69-17 40-59 40h-448q-26 0-45-19t-19-45v-448q0-42 40-59 39-17 69 14l130 129q107-101 244.500-156.500t284.500-55.500q156 0 298 61t245 164 164 245 61 298zm-640-288v448q0 14-9 23t-23 9h-320q-14 0-23-9t-9-23v-64q0-14 9-23t23-9h224v-352q0-14 9-23t23-9h64q14 0 23 9t9 23z"/></svg>
<svg style="position:absolute;left:560.1px;top:350.4px" width="15" height="15" viewBox="0 0 1792 1792"><path fill="#1e1e1e" d="M1152 1376v-160q0-14-9-23t-23-9h-96v-512q0-14-9-23t-23-9h-320q-14 0-23 9t-9 23v160q0 14 9 23t23 9h96v320h-96q-14 0-23 9t-9 23v160q0 14 9 23t23 9h448q14 0 23-9t9-23zm-128-896v-160q0-14-9-23t-23-9h-192q-14 0-23 9t-9 23v160q0 14 9 23t23 9h192q14 0 23-9t9-23zm640 416q0 209-103 385.500t-279.500 279.500-385.500 103-385.500-103-279.500-279.500-103-385.500 103-385.500 279.500-279.500 385.500-103 385.500 103 279.500 279.500 103 385.500z"/></svg>
<svg style="position:absolute;left:561.1px;top:369.1px" width="13.5" height="15.7" viewBox="0 0 14 15.5" preserveAspectRatio="none"><path d="M1.6 0.65h6.9l4.85 4.85v8.400a1 1 0 0 1-1 1h-10.700a1 1 0 0 1-1-1v-12.200a1 1 0 0 1 1-1z" fill="none" stroke="#242424" stroke-width="1.300" stroke-linejoin="round"/><path d="M8.400 0.800v4.800h4.800" fill="none" stroke="#242424" stroke-width="1.200"/><path d="M3.100 7h6.800M3.100 9.500h6.800M3.100 12h6.800" stroke="#242424" stroke-width="1.150"/></svg>
<svg style="position:absolute;left:561.1px;top:390.1px" width="13.5" height="15.8" viewBox="0 0 14 15.5" preserveAspectRatio="none"><path d="M1.6 0.65h6.900l4.850 4.850v8.400a1 1 0 0 1-1 1h-10.700a1 1 0 0 1-1-1v-12.200a1 1 0 0 1 1-1z" fill="none" stroke="#242424" stroke-width="1.300" stroke-linejoin="round"/><path d="M8.400 0.800v4.800h4.800" fill="none" stroke="#242424" stroke-width="1.200"/><path d="M4.300 7.200L2.300 9.700L4.300 12.200M9.600 7.200L11.600 9.700L9.600 12.200M7.900 6.600L6 12.900" fill="none" stroke="#242424" stroke-width="1.050"/></svg>
<svg style="position:absolute;left:560.1px;top:413.3px" width="16" height="13" viewBox="0 0 16 13"><rect x="0.700" y="0.700" width="14.600" height="11.600" rx="1.500" fill="none" stroke="#242424" stroke-width="1.400"/><path d="M0.700 3.600v-1.400a1.500 1.500 0 0 1 1.500-1.500h11.600a1.500 1.500 0 0 1 1.500 1.500v1.400z" fill="#242424"/><path d="M5 5.400h9.300M5 7.800h9.300M5 10.300h9.300" stroke="#242424" stroke-width="1.150"/><path d="M1.900 5.400h2.100M1.900 7.800h2.100M1.900 10.300h2.100" stroke="#242424" stroke-width="1.150"/></svg>
<svg style="position:absolute;left:9px;top:8.05px" width="24.06" height="21.8" viewBox="27 75 64 58"><path fill="#5a7dae" fill-rule="evenodd" d="M52.76 120.08 L52.51 124.66 L43.99 124.66 L43.74 120.08 L40.14 118.58 L36.72 121.65 L30.70 115.63 L33.77 112.21 L32.27 108.61 L27.69 108.36 L27.69 99.84 L32.27 99.59 L33.77 95.99 L30.70 92.57 L36.72 86.55 L40.14 89.62 L43.74 88.12 L43.99 83.54 L52.51 83.54 L52.76 88.12 L56.36 89.62 L59.78 86.55 L65.80 92.57 L62.73 95.99 L64.23 99.59 L68.81 99.84 L68.81 108.36 L64.23 108.61 L62.73 112.21 L65.80 115.63 L59.78 121.65 L56.36 118.58Z M56.85 104.10 A8.60 8.60 0 1 0 39.65 104.10 A8.60 8.60 0 1 0 56.85 104.10 Z M86.11 84.81 L90.00 84.97 L90.00 90.43 L86.11 90.59 L84.46 93.45 L86.26 96.90 L81.54 99.63 L79.45 96.34 L76.15 96.34 L74.06 99.63 L69.34 96.90 L71.14 93.45 L69.49 90.59 L65.60 90.43 L65.60 84.97 L69.49 84.81 L71.14 81.95 L69.34 78.50 L74.06 75.77 L76.15 79.06 L79.45 79.06 L81.54 75.77 L86.26 78.50 L84.46 81.95Z M82.00 87.70 A4.20 4.20 0 1 0 73.60 87.70 A4.20 4.20 0 1 0 82.00 87.70 Z M86.11 118.11 L90.00 118.27 L90.00 123.73 L86.11 123.89 L84.46 126.75 L86.26 130.20 L81.54 132.93 L79.45 129.64 L76.15 129.64 L74.06 132.93 L69.34 130.20 L71.14 126.75 L69.49 123.89 L65.60 123.73 L65.60 118.27 L69.49 118.11 L71.14 115.25 L69.34 111.80 L74.06 109.07 L76.15 112.36 L79.45 112.36 L81.54 109.07 L86.26 111.80 L84.46 115.25Z M82.00 121.00 A4.20 4.20 0 1 0 73.60 121.00 A4.20 4.20 0 1 0 82.00 121.00 Z"/></svg>
<svg style="position:absolute;left:114.800px;top:15.800px" width="9.200" height="5" viewBox="0 0 10 5" preserveAspectRatio="none"><path d="M0.2 0h9.600L5 5z" fill="#303030" stroke="#303030" stroke-width="0.500" stroke-linejoin="round"/></svg>
<svg style="position:absolute;left:688.500px;top:15.800px" width="9.200" height="5" viewBox="0 0 10 5" preserveAspectRatio="none"><path d="M0.2 0h9.600L5 5z" fill="#303030" stroke="#303030" stroke-width="0.500" stroke-linejoin="round"/></svg>
<svg style="position:absolute;left:717.7px;top:10.7px" width="16.4" height="16.4" viewBox="0 0 1792 1792"><path fill="#222" d="M1152 896q0-106-75-181t-181-75-181 75-75 181 75 181 181 75 181-75 75-181zm512-109v222q0 12-8 23t-20 13l-185 28q-19 54-39 91 35 50 107 138 10 12 10 25t-9 23q-27 37-99 108t-94 71q-12 0-26-9l-138-108q-44 23-91 38-16 136-29 186-7 28-36 28h-222q-14 0-24.500-8.500t-11.500-21.500l-28-184q-49-16-90-37l-141 107q-10 9-25 9-14 0-25-11-126-114-165-168-7-10-7-23 0-12 8-23 15-21 51-66.500t54-70.500q-27-50-41-99l-183-27q-13-2-21-12.500t-8-23.500v-222q0-12 8-23t19-13l186-28q14-46 39-92-40-57-107-138-10-12-10-24 0-10 9-23 26-36 98.500-107.500t94.500-71.500q13 0 26 10l138 107q44-23 91-38 16-136 29-186 7-28 36-28h222q14 0 24.500 8.500t11.500 21.500l28 184q49 16 90 37l142-107q9-9 24-9 13 0 25 10 129 119 165 170 7 8 7 22 0 12-8 23-15 21-51 66.500t-54 70.500q26 50 41 98l183 28q13 2 21 12.500t8 23.500z"/></svg>
<div style="position:absolute;left:753px;top:14px;width:10px;height:4px;background:#666;"></div>
<div style="position:absolute;left:767px;top:7.3px;width:10px;height:10.4px;background:#fff;box-sizing:border-box;border:1px solid #666;border-top:4px solid #666;"></div>
<svg style="position:absolute;left:783px;top:8px" width="9.5" height="9" viewBox="0 0 9.5 9"><path d="M0.7 0.5L8.8 8.5M8.8 0.5L0.7 8.5" stroke="#555" stroke-width="1.9" fill="none"/></svg>
<svg style="position:absolute;left:11px;top:40.100px" width="24" height="22.700" viewBox="0 0 24 22" preserveAspectRatio="none"><path d="M12 1.400 L22.600 20.300 H1.400 Z" fill="#2b2b2b" stroke="#2b2b2b" stroke-width="2.600" stroke-linejoin="round"/><rect x="10" y="6.800" width="4" height="7.400" fill="#f4f0ac"/><rect x="10" y="15.700" width="4" height="3" fill="#f4f0ac"/></svg>
<svg style="position:absolute;left:773px;top:41px" width="26" height="24" viewBox="773 41 26 24"><path d="M776 43h12.800l4.400 4.500v13.800h-17.200a1 1 0 0 1-1-1v-16.300a1 1 0 0 1 1-1z" fill="#f4f0ac" stroke="#262626" stroke-width="1.600" stroke-linejoin="round"/><rect x="777.600" y="43" width="9.200" height="6.700" rx="0.800" fill="#f4f0ac" stroke="#262626" stroke-width="1.300"/><rect x="777.400" y="43" width="4.600" height="6.700" fill="#262626"/><path d="M777.600 61.300v-6.500h12" fill="none" stroke="#262626" stroke-width="1.400" stroke-linejoin="round"/><circle cx="792.100" cy="53.300" r="3.200" fill="#262626"/><rect x="786.800" y="56.600" width="10.500" height="7.100" rx="2.200" fill="#262626"/></svg>
<svg style="position:absolute;left:27px;top:75px" width="64" height="58" viewBox="27 75 64 58"><path fill="#5a7dae" fill-rule="evenodd" d="M52.76 120.08 L52.51 124.66 L43.99 124.66 L43.74 120.08 L40.14 118.58 L36.72 121.65 L30.70 115.63 L33.77 112.21 L32.27 108.61 L27.69 108.36 L27.69 99.84 L32.27 99.59 L33.77 95.99 L30.70 92.57 L36.72 86.55 L40.14 89.62 L43.74 88.12 L43.99 83.54 L52.51 83.54 L52.76 88.12 L56.36 89.62 L59.78 86.55 L65.80 92.57 L62.73 95.99 L64.23 99.59 L68.81 99.84 L68.81 108.36 L64.23 108.61 L62.73 112.21 L65.80 115.63 L59.78 121.65 L56.36 118.58Z M56.85 104.10 A8.60 8.60 0 1 0 39.65 104.10 A8.60 8.60 0 1 0 56.85 104.10 Z M86.11 84.81 L90.00 84.97 L90.00 90.43 L86.11 90.59 L84.46 93.45 L86.26 96.90 L81.54 99.63 L79.45 96.34 L76.15 96.34 L74.06 99.63 L69.34 96.90 L71.14 93.45 L69.49 90.59 L65.60 90.43 L65.60 84.97 L69.49 84.81 L71.14 81.95 L69.34 78.50 L74.06 75.77 L76.15 79.06 L79.45 79.06 L81.54 75.77 L86.26 78.50 L84.46 81.95Z M82.00 87.70 A4.20 4.20 0 1 0 73.60 87.70 A4.20 4.20 0 1 0 82.00 87.70 Z M86.11 118.11 L90.00 118.27 L90.00 123.73 L86.11 123.89 L84.46 126.75 L86.26 130.20 L81.54 132.93 L79.45 129.64 L76.15 129.64 L74.06 132.93 L69.34 130.20 L71.14 126.75 L69.49 123.89 L65.60 123.73 L65.60 118.27 L69.49 118.11 L71.14 115.25 L69.34 111.80 L74.06 109.07 L76.15 112.36 L79.45 112.36 L81.54 109.07 L86.26 111.80 L84.46 115.25Z M82.00 121.00 A4.20 4.20 0 1 0 73.60 121.00 A4.20 4.20 0 1 0 82.00 121.00 Z"/></svg>
<div style="position:absolute;left:0;top:0;width:800px;height:604px;will-change:transform">
<span class="t" style="left:51.37px;top:11px;letter-spacing:-0.212px;">Загрузить</span>
<span class="t" style="left:289.04px;top:11px;letter-spacing:-0.028px;-webkit-text-stroke:0.55px;">Службы и процессы systemd</span>
<span class="t" style="left:621.47px;top:11px;letter-spacing:-0.450px;">Сохранить</span>
<span class="t" style="left:38.8px;top:43px;letter-spacing:-0.672px;">Внимание!</span>
<span class="t" style="left:121.5px;top:83px;font-size:15px;letter-spacing:0.500px;-webkit-text-stroke:0.55px;">Службы и процессы systemd</span>
<span class="t" style="left:120.71px;top:110px;letter-spacing:0.307px;-webkit-text-stroke:0.55px;">Настройка работы служб и процессов системы</span>
<span class="t" style="left:29.18px;top:149px;letter-spacing:-0.470px;">Системные юниты</span>
<span class="t" style="left:145.58px;top:149px;letter-spacing:-0.261px;">Пользовательские юниты</span>
<span class="t" style="left:304.13px;top:149px;letter-spacing:-0.342px;">Конфигурационные файлы</span>
<span class="t" style="left:472.18px;top:149px;letter-spacing:-0.340px;">Сессии</span>
<span class="t" style="left:525.44px;top:149px;letter-spacing:-0.224px;">Таймеры</span>
<span class="t" style="left:11.4px;top:180px;letter-spacing:-0.116px;">Все</span>
<span class="t" style="left:267.16px;top:180px;letter-spacing:-0.116px;">Показать не активные</span>
<span class="t" style="left:425.66px;top:180px;color:#858592;letter-spacing:-0.140px;">Показать не загруженные</span>
<span class="t" style="left:593.55px;top:180px;letter-spacing:-0.514px;">avahi</span>
<span class="t" style="left:74.13px;top:209px;letter-spacing:-0.223px;">Настройка в конфигурации</span>
<span class="t" style="left:307.13px;top:209px;letter-spacing:-0.120px;">Настройка в системе</span>
<span class="t" style="left:586.63px;top:219px;letter-spacing:-0.738px;">Имя юнита</span>
<span class="t" style="left:47.47px;top:228px;letter-spacing:-0.077px;">Автостарт</span>
<span class="t" style="left:119.11px;top:228px;letter-spacing:-0.163px;">Автостоп</span>
<span class="t" style="left:184.13px;top:228px;letter-spacing:-0.113px;">Блокировать</span>
<span class="t" style="left:280.11px;top:228px;letter-spacing:-0.139px;">Автостарт</span>
<span class="t" style="left:344.98px;top:228px;letter-spacing:-0.069px;">Запущен</span>
<span class="t" style="left:410.47px;top:228px;letter-spacing:0.272px;">Статус</span>
<span class="t" style="left:409.55px;top:248px;letter-spacing:-0.206px;">активен</span>
<span class="t" style="left:37.32px;top:547px;letter-spacing:-0.136px;-webkit-text-stroke:0.55px;">Служба:</span>
<span class="t" style="left:121.55px;top:547px;letter-spacing:0.015px;">avahi-daemon.service</span>
<span class="t" style="left:37.51px;top:570px;letter-spacing:-0.625px;-webkit-text-stroke:0.55px;">Описание:</span>
<span class="t" style="left:121.47px;top:570px;letter-spacing:-0.057px;">Avahi mDNS/DNS SD-Stack</span>
<span class="t" style="left:579px;top:263px;letter-spacing:-0.908px;">Обновить</span>
<span class="t" style="left:577.98px;top:285px;letter-spacing:-0.183px;">Запустить/Остановить</span>
<span class="t" style="left:578.16px;top:306px;letter-spacing:-0.293px;">Перезапустить</span>
<span class="t" style="left:578.16px;top:328px;letter-spacing:-0.185px;">Перезагрузить настройки</span>
<span class="t" style="left:578.47px;top:350px;letter-spacing:-0.566px;">Состояние</span>
<span class="t" style="left:578.16px;top:371px;letter-spacing:-0.132px;">Показать лог</span>
<span class="t" style="left:578.16px;top:392px;letter-spacing:-0.222px;">Показать файл-источник</span>
<span class="t" style="left:578.47px;top:413px;letter-spacing:-0.482px;">Свойства</span>
</div>
</body></html>
